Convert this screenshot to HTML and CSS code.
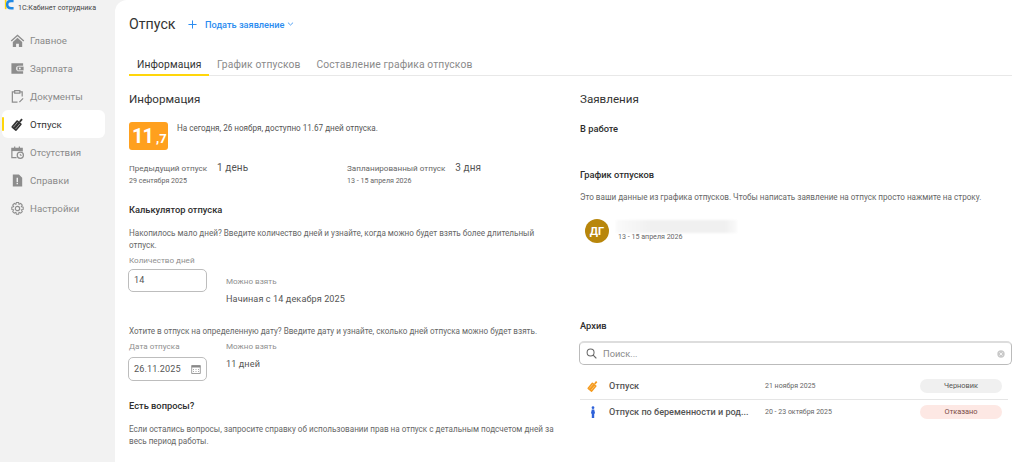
FILE: index.html
```html
<!DOCTYPE html>
<html lang="ru">
<head>
<meta charset="utf-8">
<title>Отпуск</title>
<link rel="stylesheet" href="styles.css">
</head>
<body>
<div class="app">
  <aside class="sidebar">
    <div class="brand">
      <svg class="logo" viewBox="0 0 12 14"><path d="M1 0h2v12H1z" fill="#ffd60a"/><path d="M11.500 2.200H8.500Q3.800 2.200 3.800 6.500t4.700 4.300h3" fill="none" stroke="#1e88e5" stroke-width="3"/></svg>
      <span>1С:Кабинет сотрудника</span>
    </div>
    <nav class="nav">
      <a class="nav-item"><svg class="nav-icon" viewBox="0 0 16 16"><path d="M8 1.500 .8 8l1 1L8 3.400 14.200 9l1-1zM3 9.500 8 5l5 4.500V15H9.500v-3.500h-3V15H3z" fill="#8d8d8d"/></svg>Главное</a>
      <a class="nav-item"><svg class="nav-icon" viewBox="0 0 16 16"><path d="M1.500 2.500H14V5H9.500a3 3 0 0 0 0 6H14v2.500H1.500z" fill="#8d8d8d"/><rect x="8" y="6" width="6.500" height="4" fill="#8d8d8d"/><circle cx="10.500" cy="8" r="1" fill="#f2f2f2"/></svg>Зарплата</a>
      <a class="nav-item"><svg class="nav-icon" viewBox="0 0 16 16"><path d="M5 3H2.500v11H8m5-6V3h-2.500M5 1.800h5.500v2.500H5zM10 14l4-4" fill="none" stroke="#8d8d8d" stroke-width="1.300"/></svg>Документы</a>
      <a class="nav-item active"><span class="marker"></span><svg class="nav-icon" viewBox="0 0 16 16"><g transform="rotate(40 8 8)"><rect x="4.500" y="4.500" width="7" height="10" rx="1" fill="#333"/><path d="M7 4.500V.5h2v4" fill="#333"/><path d="M6.500 6v7M9.500 6v7" stroke="#fff" stroke-width=".5"/></g></svg>Отпуск</a>
      <a class="nav-item"><svg class="nav-icon" viewBox="0 0 16 16"><path d="M7 13.500H2V3.500h11V7M5 1.500v3M10 1.500v3" fill="none" stroke="#8d8d8d" stroke-width="1.300"/><path d="M2 3.500h11v3H2z" fill="#8d8d8d"/><circle cx="11" cy="11" r="3.300" fill="none" stroke="#8d8d8d" stroke-width="1.300"/><path d="M11 9.500V11h1.500" fill="none" stroke="#8d8d8d"/></svg>Отсутствия</a>
      <a class="nav-item"><svg class="nav-icon" viewBox="0 0 16 16"><path d="M3 1.500h6.500l3.500 3.500v9.500H3z" fill="#8d8d8d"/><path d="M7 5h1.500v4.500H7zM7 10.500h1.500V12H7z" fill="#f2f2f2"/></svg>Справки</a>
      <a class="nav-item"><svg class="nav-icon" viewBox="0 0 16 16"><circle cx="8" cy="8" r="2.300" fill="none" stroke="#8d8d8d" stroke-width="1.200"/><path d="M6.800 1.500h2.400l.4 2 1.800-.9 1.700 1.700-1 1.700 2 .6v2.400l-2 .5 1 1.800-1.700 1.700-1.800-1-.4 2.100H6.800l-.5-2.100-1.700 1-1.700-1.700 1-1.800-2-.5V6.600l2-.6-1-1.700 1.700-1.700 1.700.9z" fill="none" stroke="#8d8d8d" stroke-width="1.100"/></svg>Настройки</a>
    </nav>
  </aside>
  <main class="main">
    <header class="page-head">
      <h1 class="page-title">Отпуск</h1>
      <a class="apply">
        <svg class="apply-plus" viewBox="0 0 10 10"><path d="M5 .5v9M.5 5h9" stroke="#2b8cf0" stroke-width="1.100" fill="none"/></svg>
        <span>Подать заявление</span>
        <svg class="apply-chev" viewBox="0 0 8 5"><path d="m.8.800 3.200 3 3.200-3" stroke="#2b8cf0" fill="none"/></svg>
      </a>
    </header>
    <div class="tabs">
      <a class="tab current">Информация</a>
      <a class="tab">График отпусков</a>
      <a class="tab">Составление графика отпусков</a>
    </div>
    <div class="columns">
      <section class="col-left">
        <h2 class="section-title">Информация</h2>
        <div class="balance">
          <div class="balance-badge"><span class="big">11</span><span class="small">,7</span></div>
          <p class="balance-text">На сегодня, 26 ноября, доступно 11.67 дней отпуска.</p>
        </div>
        <div class="stats">
          <div class="stat">
            <div class="stat-row"><span class="stat-label">Предыдущий отпуск</span><span class="stat-value">1 день</span></div>
            <div class="stat-date">29 сентября 2025</div>
          </div>
          <div class="stat">
            <div class="stat-row"><span class="stat-label">Запланированный отпуск</span><span class="stat-value">3 дня</span></div>
            <div class="stat-date">13 - 15 апреля 2026</div>
          </div>
        </div>
        <h3 class="sub-title calc-title">Калькулятор отпуска</h3>
        <p class="body-text calc-text">Накопилось мало дней? Введите количество дней и узнайте, когда можно будет взять более длительный отпуск.</p>
        <div class="calc-row calc-row-days">
          <div class="field">
            <div class="field-label">Количество дней</div>
            <div class="input">14</div>
          </div>
          <div class="result result-low">
            <div class="field-label">Можно взять</div>
            <div class="result-value">Начиная с 14 декабря 2025</div>
          </div>
        </div>
        <p class="body-text date-text">Хотите в отпуск на определенную дату? Введите дату и узнайте, сколько дней отпуска можно будет взять.</p>
        <div class="calc-row calc-row-date">
          <div class="field">
            <div class="field-label">Дата отпуска</div>
            <div class="input input-date">26.11.2025
              <svg class="cal" viewBox="0 0 10 10"><path d="M.7 1.500h8.600v8H.7z" fill="none" stroke="#888" stroke-width=".8"/><path d="M.7 1.500h8.600v2H.7z" fill="#888"/><path d="M2 5h1v1H2zM4.500 5h1v1h-1zM7 5h1v1H7zM2 7h1v1H2zM4.500 7h1v1h-1zM7 7h1v1H7z" fill="#aaa"/></svg>
            </div>
          </div>
          <div class="result">
            <div class="field-label">Можно взять</div>
            <div class="result-value">11 дней</div>
          </div>
        </div>
        <h3 class="sub-title q-title">Есть вопросы?</h3>
        <p class="body-text q-text">Если остались вопросы, запросите справку об использовании прав на отпуск с детальным подсчетом дней за весь период работы.</p>
      </section>
      <section class="col-right">
        <h2 class="section-title">Заявления</h2>
        <h3 class="sub-title work-title">В работе</h3>
        <h3 class="sub-title sched-title">График отпусков</h3>
        <p class="body-text sched-text">Это ваши данные из графика отпусков. Чтобы написать заявление на отпуск просто нажмите на строку.</p>
        <div class="person">
          <div class="avatar">ДГ</div>
          <div class="person-info">
            <div class="blurred"></div>
            <div class="stat-date person-date">13 - 15 апреля 2026</div>
          </div>
        </div>
        <h3 class="sub-title arch-title">Архив</h3>
        <div class="search">
          <svg class="search-icon" viewBox="0 0 12 12"><circle cx="5" cy="5" r="3.800" fill="none" stroke="#666" stroke-width="1.100"/><path d="m7.800 7.800 3.500 3.500" stroke="#666" stroke-width="1.300"/></svg>
          <span class="search-text">Поиск...</span>
          <svg class="search-clear" viewBox="0 0 8 8"><circle cx="4" cy="4" r="3.700" fill="#c9c9c9"/><path d="m2.500 2.500 3 3m0-3-3 3" stroke="#fff" stroke-width=".8"/></svg>
        </div>
        <div class="arch-row arch-sep">
          <svg class="arch-icon" viewBox="0 0 14 14"><g transform="rotate(40 7 7)"><rect x="3.500" y="4" width="7" height="9.500" rx="1" fill="#f59a1c"/><path d="M6 4V.3h2V4" fill="#f59a1c"/><path d="M5.500 5.500v6.500M8.500 5.500v6.500" stroke="#fff" stroke-width=".4"/></g></svg>
          <span class="arch-name">Отпуск</span>
          <span class="arch-date">21 ноября 2025</span>
          <span class="pill pill-grey">Черновик</span>
        </div>
        <div class="arch-row arch-last">
          <svg class="arch-icon" viewBox="0 0 14 14"><circle cx="7" cy="2" r="1.600" fill="#2f62d9"/><path d="M5.600 4.200h2.800l1 4.300-1 .4V14H5.600V9l-1-.5z" fill="#2f62d9"/></svg>
          <span class="arch-name">Отпуск по беременности и род...</span>
          <span class="arch-date">20 - 23 октября 2025</span>
          <span class="pill pill-red">Отказано</span>
        </div>
      </section>
    </div>
  </main>
</div>
</body>
</html>
```
FILE: styles.css
```css
* { box-sizing: border-box; }
html, body { margin: 0; height: 100%; overflow: hidden; }
body { font-family: Roboto, "Noto Sans", sans-serif; color: #333; background: #f2f2f2; }
h1, h2, h3, p { margin: 0; font-weight: 400; }

.app { display: flex; height: 462px; }

.sidebar { width: 115px; flex: none; background: #f2f2f2; }
.brand { display: flex; align-items: center; height: 14px; padding-left: 4px; font-size: 7.1px; color: #444; }
.brand span { margin-left: 4px; }
.logo { width: 10px; height: 12px; margin-top: -4px; }
.nav { display: flex; flex-direction: column; padding: 12px 10px 0 2px; }
.nav-item { position: relative; display: flex; align-items: center; height: 28px; padding-left: 8px; font-size: 9.7px; color: #8a8a8a; border-radius: 6px; }
.nav-icon { width: 15px; height: 15px; margin-right: 5px; flex: none; }
.nav-item.active { background: #fff; color: #333; }
.marker { position: absolute; left: 0; top: 7px; width: 2px; height: 14px; background: #ffd60a; border-radius: 1px; }

.main { flex: 1; min-width: 0; background: #fff; border-top-left-radius: 12px; padding: 0 12px 0 14px; }
.page-head { display: flex; align-items: center; height: 48px; }
.page-title { font-size: 14.2px; color: #333; width: 59px; }
.apply { display: flex; align-items: center; color: #2b8cf0; font-size: 9.2px; font-weight: 500; }
.apply-plus { width: 9px; height: 9px; margin-right: 8px; }
.apply-chev { width: 7px; height: 4px; margin-left: 3px; }

.tabs { display: flex; height: 28px; border-bottom: 1px solid #e8e8e8; align-items: flex-end; }
.tab { display: block; height: 28px; line-height: 36px; padding: 0 8px; font-size: 10.3px; letter-spacing: .12px; color: #8a8a8a; }
.tab.current { color: #333; border-bottom: 2px solid #ffd60a; width: 80px; white-space: nowrap; margin-bottom: -1px; height: 29px; }

.columns { display: grid; grid-template-columns: 426px 1fr; column-gap: 25px; }
.section-title { font-size: 11.6px; line-height: 16px; margin-top: 15px; color: #333; }

.balance { display: flex; margin-top: 15px; }
.balance-badge { width: 39px; height: 28px; background: #ffa01e; border-radius: 3px; color: #fff; font-weight: 700; display: flex; align-items: baseline; padding: 2px 0 0 3px; white-space: nowrap; }
.big { font-size: 20px; line-height: 24px; letter-spacing: -1px; }
.small { font-size: 13px; margin-left: 3px; }
.balance-text { font-size: 8.15px; color: #555; margin: 1px 0 0 9px; line-height: 10px; }

.stats { display: grid; grid-template-columns: 218px 1fr; margin-top: 11px; }
.stat-row { display: flex; align-items: center; height: 13px; }
.stat-label { font-size: 8.1px; color: #666; margin-right: 10px; }
.stat-value { font-size: 10px; letter-spacing: .1px; color: #555; }
.stat-date { font-size: 7.1px; color: #666; margin-top: 2px; line-height: 10px; }

.sub-title { font-size: 9.3px; font-weight: 500; color: #2d2d2d; line-height: 12px; }
.calc-title { margin-top: 18px; }
.body-text { font-size: 8.15px; color: #666; line-height: 12px; }
.calc-text { margin-top: 11px; }

.calc-row { display: flex; }
.calc-row-days { margin-top: 3px; }
.calc-row-date { margin-top: 3px; }
.field { width: 78px; }
.field-label { font-size: 8.1px; line-height: 12px; color: #8f8f8f; }
.input { height: 23px; margin: 3px 0 0 -1px; width: 79px; border: 1px solid #bdbdbd; border-radius: 5px; font-size: 9.1px; line-height: 21px; padding-left: 5px; color: #555; letter-spacing: .1px; }
.input-date { height: 24px; margin-top: 5px; display: flex; justify-content: space-between; align-items: center; padding-right: 5px; }
.cal { width: 10px; height: 10px; }
.result { margin-left: 19px; }
.result-value { font-size: 9.1px; letter-spacing: .1px; color: #555; margin-top: 5px; line-height: 14px; }
.result-low { margin-top: 21px; }
.date-text { margin-top: 19px; }
.q-title { margin-top: 19px; }
.q-text { margin-top: 11px; }

.work-title { margin-top: 16px; }
.sched-title { margin-top: 34px; }
.sched-text { margin-top: 10px; }
.person { display: flex; align-items: center; margin-top: 14px; padding-left: 5px; height: 28px; }
.avatar { width: 24px; height: 24px; border-radius: 50%; background: #b8860b; color: #fff; font-size: 11px; font-weight: 700; display: flex; align-items: center; justify-content: center; flex: none; margin-right: 9px; }
.blurred { width: 121px; height: 13px; margin-left: -2px; background: linear-gradient(90deg, #fafafa, #f0f0f0 30%, #f0f0f0 90%, #fafafa); filter: blur(1px); }
.person-date { margin-top: -1px; }
.arch-title { margin-top: 75px; }
.search { display: flex; align-items: center; height: 24px; margin-top: 9px; margin-left: -1px; border: 1px solid #bbb; border-top-width: 2px; border-top-color: #ddd; border-radius: 5px; padding: 0 6px; }
.search-icon { width: 11px; height: 11px; margin-right: 6px; }
.search-text { font-size: 9.3px; color: #8a8a8a; flex: 1; }
.search-clear { width: 8px; height: 8px; }

.arch-row { display: grid; grid-template-columns: 12px 166px 155px 82px; align-items: center; padding-left: 7px; }
.arch-sep { height: 26px; padding-bottom: 2px; border-bottom: 1px solid #e5e5e5; margin: 9px 4px 0 0; }
.arch-last { height: 24px; }
.arch-icon { width: 12px; height: 12px; }
.arch-name { font-size: 9.1px; font-weight: 500; color: #555; margin-left: 10px; white-space: nowrap; }
.arch-date { font-size: 7px; color: #666; }
.pill { height: 14px; border-radius: 7px; font-size: 7.4px; line-height: 14px; text-align: center; color: #555; }
.pill-grey { background: #f0f0f0; }
.pill-red { background: #fde8e4; color: #7a4a44; }
```
